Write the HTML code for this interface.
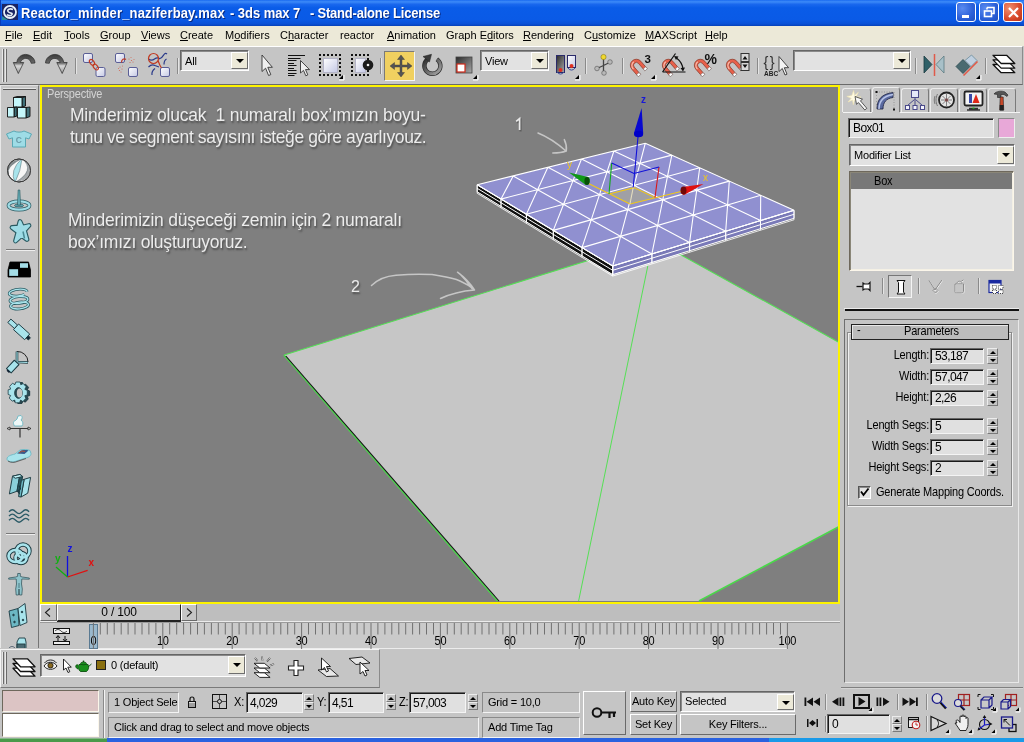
<!DOCTYPE html>
<html><head><meta charset="utf-8">
<style>
*{box-sizing:border-box;margin:0;padding:0}
html,body{width:1024px;height:742px;overflow:hidden;background:#c5c5c5;font-family:"Liberation Sans",sans-serif;font-size:12px;color:#000}
#root{position:absolute;left:0;top:0;width:1024px;height:742px;will-change:transform}
.abs{position:absolute}
svg{position:absolute;overflow:visible}
#title{position:absolute;left:0;top:0;width:1024px;height:26px;background:linear-gradient(#1a6af0 0,#3d8bf8 7%,#1a68ee 16%,#0a5ce8 30%,#0a5ae6 75%,#0a50d6 92%,#0640b8 100%);border-left:1px solid #0a3cb8}
#title .t{position:absolute;left:20px;top:6px;color:#fff;font-weight:bold;font-size:13px;letter-spacing:0.05px;white-space:pre;text-shadow:1px 1px 0 #0a2a80;transform:scaleY(1.1);transform-origin:0 60%}
#menu{position:absolute;left:0;top:26px;width:1024px;height:20px;background:#ece9d8}
#menu span{position:absolute;top:3px;font-size:11px;white-space:pre}
#tb{position:absolute;left:0;top:46px;width:1023px;height:39px;background:#c5c5c5;border-top:1px solid #fff;border-bottom:1px solid #6a6a6a;border-right:1px solid #8c8c8c}
.dd{position:absolute;background:#e2e2e2;border:1px solid;border-color:#666 #fff #fff #666;box-shadow:inset 1px 1px 0 #8a8a8a}
.dd .b{position:absolute;right:0;top:0;bottom:1px;width:17px;background:#ece9d8;border:1px solid;border-color:#fff #6e6e6e #6e6e6e #fff}
.dd .b:after{content:"";position:absolute;left:3.5px;top:6px;border:4px solid transparent;border-top:4px solid #000;border-bottom:0}
.dd .x{position:absolute;left:3px;top:3px;font-size:11px;white-space:pre}
.sep{position:absolute;width:2px;border-left:1px solid #8a8a8a;border-right:1px solid #e4e4e4}
.fly{position:absolute;width:0;height:0;border:2px solid transparent;border-right-color:#000;border-bottom-color:#000}
#vp{position:absolute;left:40px;top:85px;width:800px;height:519px;background:#7f7f7f;border:2px solid #fdf300;overflow:hidden}
.vt{position:absolute;color:#ececec;font-size:17.5px;white-space:pre;text-shadow:1px 2px 2px rgba(40,40,40,.6)}
.fld{position:absolute;background:#e0e0e0;border:1px solid;border-color:#666 #f4f4f4 #f4f4f4 #666;box-shadow:inset 1px 1px 0 #1a1a1a;font-size:11px;white-space:pre;padding:2px 0 0 3px;overflow:hidden}
.r{text-align:right}
.lbl{position:absolute;font-size:11px;white-space:pre;transform:scaleY(1.08);transform-origin:50% 65%}
.spn{position:absolute;width:11px;height:16px}
.spn i{position:absolute;left:0;width:11px;height:8px;border:1px solid;border-color:#ececec #7a7a7a #7a7a7a #ececec}
.spn i:first-child{top:0}.spn i:last-child{top:8px}
.spn i:after{content:"";position:absolute;left:1.5px;top:1.5px;border:3px solid transparent;border-bottom:3px solid #000;border-top:0}
.spn i:last-child:after{border-top:3px solid #000;border-bottom:0;top:2px}
.spn.s{width:10px;height:16px}.spn.s i{width:10px}
.spn.s i:after{left:1px}
.wb{position:absolute;top:2px;width:20px;height:20px;border:1px solid #fff;border-radius:3px;background:radial-gradient(circle at 30% 30%,#5a8bf0,#2a5fd8 60%,#1d4ec0)}
.wc{background:radial-gradient(circle at 30% 30%,#f09070,#d8492a 60%,#b83318)}
.sf{position:absolute;border:1px solid;border-color:#8a8a8a #f4f4f4 #f4f4f4 #8a8a8a;font-size:11px;white-space:pre;padding:3px 0 0 5px;overflow:hidden}
.lbl,.btn,.sf,.dd .x{letter-spacing:-.2px}
.fld{letter-spacing:-.6px}
.btn{position:absolute;background:#c5c5c5;border:1px solid;border-color:#fff #6a6a6a #6a6a6a #fff;font-size:11px;white-space:pre;text-align:center;overflow:hidden}
</style></head><body>
<div id="root"><div id="title"><svg style="left:1px;top:4px" width="16" height="16" viewBox="0 0 16 16"><rect width="16" height="16" fill="#1a2464"/><path d="M0 12v4h6z" fill="#2a8a9a"/><circle cx="8" cy="8" r="6" fill="none" stroke="#e8f0f8" stroke-width="1.8"/><path d="M11 5.5C8 4 5 5.5 6 7.5S11 8.5 10 10.5 6 11.5 5 10.5" fill="none" stroke="#e8f0f8" stroke-width="1.6"/></svg><div class="t" style="letter-spacing:.16px">Reactor_minder_naziferbay.max</div><div class="t" style="left:229px;letter-spacing:-.05px">- 3ds max 7</div><div class="t" style="left:309px;letter-spacing:-.21px">- Stand-alone License</div>
<div class="wb" style="left:955px"><i style="position:absolute;left:5px;top:12px;width:7px;height:3px;background:#fff"></i></div>
<div class="wb" style="left:978px"><svg width="19" height="19" viewBox="0 0 19 19" style="left:0;top:0"><path d="M7 4.5h7v6h-2M7 4.5v2" fill="none" stroke="#fff" stroke-width="1.6"/><rect x="4.5" y="8" width="7" height="5.5" fill="none" stroke="#fff" stroke-width="1.6"/></svg></div>
<div class="wb wc" style="left:1002px"><svg width="19" height="19" viewBox="0 0 19 19" style="left:0;top:0"><path d="M5 5l9 9M14 5l-9 9" stroke="#fff" stroke-width="2.2"/></svg></div>
</div>
<div id="menu"><span style="left:5px"><u>F</u>ile</span><span style="left:33px"><u>E</u>dit</span><span style="left:64px"><u>T</u>ools</span><span style="left:100px"><u>G</u>roup</span><span style="left:141px"><u>V</u>iews</span><span style="left:180px"><u>C</u>reate</span><span style="left:225px">M<u>o</u>difiers</span><span style="left:280px">C<u>h</u>aracter</span><span style="left:340px">reactor</span><span style="left:387px"><u>A</u>nimation</span><span style="left:446px">Graph E<u>d</u>itors</span><span style="left:523px"><u>R</u>endering</span><span style="left:584px">C<u>u</u>stomize</span><span style="left:645px"><u>M</u>AXScript</span><span style="left:705px"><u>H</u>elp</span></div>
<div id="tb"></div>
<div class="abs" style="left:2px;top:49px;width:2px;height:33px;border-left:1px solid #e8e8e8;border-right:1px solid #6a6a6a"></div>
<div class="abs" style="left:5px;top:49px;width:2px;height:33px;border-left:1px solid #e8e8e8;border-right:1px solid #6a6a6a"></div>
<div class="sep" style="left:75px;top:58px;height:16px"></div><div class="sep" style="left:177px;top:58px;height:16px"></div><div class="sep" style="left:380px;top:58px;height:16px"></div><div class="sep" style="left:585px;top:58px;height:16px"></div><div class="sep" style="left:622px;top:58px;height:16px"></div><div class="sep" style="left:757px;top:58px;height:16px"></div><div class="sep" style="left:915px;top:58px;height:16px"></div><div class="sep" style="left:985px;top:58px;height:16px"></div><div class="dd" style="left:180px;top:50px;width:69px;height:21px"><span class="x" style="top:4px;left:4px">All</span><div class="b" style="top:1px;bottom:1px"></div></div>
<div class="dd" style="left:480px;top:50px;width:69px;height:21px"><span class="x" style="top:4px;left:4px">View</span><div class="b" style="top:1px;bottom:1px"></div></div>
<div class="dd" style="left:793px;top:50px;width:118px;height:21px"><div class="b" style="top:1px;bottom:1px"></div></div>
<div class="abs" style="left:384px;top:51px;width:31px;height:30px;background:#f0d060;border:1px solid;border-color:#7a7a7a #f4f4f4 #f4f4f4 #7a7a7a"></div>
<div class="abs" style="left:0px;top:85px;width:39px;height:563px;border-left:1px solid #e8e8e8;border-right:1px solid #757575;border-top:1px solid #e0e0e0"></div>
<div class="abs" style="left:3px;top:88px;width:33px;height:2px;border-top:1px solid #e4e4e4;border-bottom:1px solid #5a5a5a"></div>
<div class="abs" style="left:6px;top:249px;width:29px;height:2px;border-top:1px solid #7a7a7a;border-bottom:1px solid #eee"></div>
<div class="abs" style="left:6px;top:533px;width:29px;height:2px;border-top:1px solid #7a7a7a;border-bottom:1px solid #eee"></div>
<div id="vp"></div>
<div class="lbl" style="left:47px;top:88px;color:#d4d4d4;font-size:11px">Perspective</div>
<div class="vt" id="l1" style="left:70px;top:105px;letter-spacing:-.22px">Minderimiz olucak  1 numaralı box’ımızın boyu-</div>
<div class="vt" id="l2" style="left:70px;top:127px;letter-spacing:-.4px">tunu ve segment sayısını isteğe göre ayarlıyouz.</div>
<div class="vt" id="l3" style="left:68px;top:210px;letter-spacing:-.22px">Minderimizin düşeceği zemin için 2 numaralı</div>
<div class="vt" id="l4" style="left:68px;top:232px;letter-spacing:-.22px">box’ımızı oluşturuyoruz.</div>
<div class="vt" style="left:351px;top:278px;font-size:16px">2</div>
<!-- right command panel -->

<div class="abs" style="left:842px;top:88px;width:29px;height:24px;border:1px solid;border-color:#ececec #7a7a7a transparent #ececec;border-radius:3px 3px 0 0;border-bottom:0"></div><div class="abs" style="left:872px;top:87px;width:28px;height:25px;border:1px solid;border-color:#ececec #7a7a7a transparent #ececec;border-radius:3px 3px 0 0;border-bottom:0"></div><div class="abs" style="left:901px;top:88px;width:28px;height:24px;border:1px solid;border-color:#ececec #7a7a7a transparent #ececec;border-radius:3px 3px 0 0;border-bottom:0"></div><div class="abs" style="left:930px;top:88px;width:28px;height:24px;border:1px solid;border-color:#ececec #7a7a7a transparent #ececec;border-radius:3px 3px 0 0;border-bottom:0"></div><div class="abs" style="left:959px;top:88px;width:28px;height:24px;border:1px solid;border-color:#ececec #7a7a7a transparent #ececec;border-radius:3px 3px 0 0;border-bottom:0"></div><div class="abs" style="left:988px;top:88px;width:28px;height:24px;border:1px solid;border-color:#ececec #7a7a7a transparent #ececec;border-radius:3px 3px 0 0;border-bottom:0"></div><div class="abs" style="left:843px;top:112px;width:29px;height:1px;background:#f4f4f4"></div><div class="abs" style="left:900px;top:112px;width:120px;height:1px;background:#f4f4f4"></div>
<div class="fld" style="left:848px;top:118px;width:146px;height:20px;font-size:12px;padding:2px 0 0 4px">Box01</div>
<div class="abs" style="left:998px;top:118px;width:17px;height:20px;background:#e8a8d8;border:1px solid;border-color:#8a8a8a #eee #eee #8a8a8a"></div>
<div class="dd" style="left:849px;top:144px;width:166px;height:22px"><span class="x" style="top:4px;left:4px;font-size:11px">Modifier List</span><div class="b" style="top:1px;bottom:1px"></div></div>
<div class="abs" style="left:849px;top:171px;width:165px;height:100px;background:#e2e2e2;border:1px solid;border-color:#6e685c #fbf6ea #fbf6ea #6e685c;box-shadow:inset 1px 1px 0 #8a8678,inset -1px -1px 0 #f4f0e4"></div>
<div class="abs" style="left:851px;top:173px;width:161px;height:16px;background:#787878"></div>
<div class="lbl" style="left:874px;top:175px;font-size:11px">Box</div>
<div class="sep" style="left:882px;top:278px;height:16px"></div><div class="sep" style="left:918px;top:278px;height:16px"></div><div class="sep" style="left:978px;top:278px;height:16px"></div>
<div class="abs" style="left:888px;top:275px;width:24px;height:23px;background:#cfcfcf;border:1px solid;border-color:#777 #f4f4f4 #f4f4f4 #777"></div>
<div class="abs" style="left:844px;top:308px;width:175px;height:1px;background:#ececec"></div><div class="abs" style="left:845px;top:309px;width:174px;height:2px;background:#111"></div>
<div class="abs" style="left:844px;top:319px;width:175px;height:364px;border:1px solid;border-color:#6e6e6e #e8e8e8 #e8e8e8 #6e6e6e"></div>
<div class="abs" style="left:847px;top:332px;width:165px;height:174px;border:1px solid #8a8a8a;box-shadow:1px 1px 0 #f0f0f0,inset 1px 1px 0 #f0f0f0"></div>
<div class="abs" style="left:851px;top:324px;width:158px;height:16px;background:#bcbcbc;border:1px solid #222;box-shadow:inset 1px 1px 0 #e8e8e8"></div>
<div class="lbl" style="left:857px;top:324px;font-size:11px">-</div>
<div class="lbl" id="par" style="left:904px;top:325px;font-size:11px">Parameters</div>
<div class="lbl r" style="right:95px;top:349px;font-size:11px">Length:</div><div class="fld" style="left:930px;top:348px;width:54px;height:16px;padding:0 0 0 4px;font-size:12px;line-height:14px">53,187</div><div class="spn" style="left:987px;top:348px"><i></i><i></i></div><div class="lbl r" style="right:95px;top:370px;font-size:11px">Width:</div><div class="fld" style="left:930px;top:369px;width:54px;height:16px;padding:0 0 0 4px;font-size:12px;line-height:14px">57,047</div><div class="spn" style="left:987px;top:369px"><i></i><i></i></div><div class="lbl r" style="right:95px;top:391px;font-size:11px">Height:</div><div class="fld" style="left:930px;top:390px;width:54px;height:16px;padding:0 0 0 4px;font-size:12px;line-height:14px">2,26</div><div class="spn" style="left:987px;top:390px"><i></i><i></i></div><div class="lbl r" style="right:95px;top:419px;font-size:11px">Length Segs:</div><div class="fld" style="left:930px;top:418px;width:54px;height:16px;padding:0 0 0 4px;font-size:12px;line-height:14px">5</div><div class="spn" style="left:987px;top:418px"><i></i><i></i></div><div class="lbl r" style="right:95px;top:440px;font-size:11px">Width Segs:</div><div class="fld" style="left:930px;top:439px;width:54px;height:16px;padding:0 0 0 4px;font-size:12px;line-height:14px">5</div><div class="spn" style="left:987px;top:439px"><i></i><i></i></div><div class="lbl r" style="right:95px;top:461px;font-size:11px">Height Segs:</div><div class="fld" style="left:930px;top:460px;width:54px;height:16px;padding:0 0 0 4px;font-size:12px;line-height:14px">2</div><div class="spn" style="left:987px;top:460px"><i></i><i></i></div><div class="abs" style="left:858px;top:486px;width:13px;height:13px;background:#e2e2e2;border:1px solid;border-color:#555 #fff #fff #555;box-shadow:inset 1px 1px 0 #8a8a8a"></div>
<div class="lbl" id="gmc" style="left:876px;top:486px;font-size:11px">Generate Mapping Coords.</div>
<!-- time slider -->
<div class="abs" style="left:40px;top:604px;width:800px;height:19px;background:#bebebe;border-bottom:1px solid #9a9a9a;box-shadow:inset 0 -1px 0 #ececec"></div>
<div class="btn" style="left:40px;top:604px;width:17px;height:17px"></div>
<div class="btn" style="left:57px;top:604px;width:124px;height:17px;font-size:12px;line-height:15px;border-color:#fff #222 #222 #fff;box-shadow:0 1px 0 #222">0 / 100</div>
<div class="btn" style="left:181px;top:604px;width:16px;height:17px"></div>
<!-- track bar -->
<div class="abs" style="left:89px;top:623px;width:699px;height:26px;background:#cacaca;border-bottom:1px solid #ececec"></div>
<div class="abs" style="left:89px;top:624px;width:9px;height:25px;background:#9ab8cc;border:1px solid #5a7a92"></div>
<div class="lbl" style="left:73.4px;width:40px;text-align:center;top:635px;font-size:11px;color:#000;text-shadow:0 0 1px #cacaca">0</div><div class="lbl" style="left:142.8px;width:40px;text-align:center;top:635px;font-size:11px;color:#000;text-shadow:0 0 1px #cacaca">10</div><div class="lbl" style="left:212.2px;width:40px;text-align:center;top:635px;font-size:11px;color:#000;text-shadow:0 0 1px #cacaca">20</div><div class="lbl" style="left:281.6px;width:40px;text-align:center;top:635px;font-size:11px;color:#000;text-shadow:0 0 1px #cacaca">30</div><div class="lbl" style="left:351.0px;width:40px;text-align:center;top:635px;font-size:11px;color:#000;text-shadow:0 0 1px #cacaca">40</div><div class="lbl" style="left:420.4px;width:40px;text-align:center;top:635px;font-size:11px;color:#000;text-shadow:0 0 1px #cacaca">50</div><div class="lbl" style="left:489.8px;width:40px;text-align:center;top:635px;font-size:11px;color:#000;text-shadow:0 0 1px #cacaca">60</div><div class="lbl" style="left:559.2px;width:40px;text-align:center;top:635px;font-size:11px;color:#000;text-shadow:0 0 1px #cacaca">70</div><div class="lbl" style="left:628.6px;width:40px;text-align:center;top:635px;font-size:11px;color:#000;text-shadow:0 0 1px #cacaca">80</div><div class="lbl" style="left:698.0px;width:40px;text-align:center;top:635px;font-size:11px;color:#000;text-shadow:0 0 1px #cacaca">90</div><div class="lbl" style="left:767.4px;width:40px;text-align:center;top:635px;font-size:11px;color:#000;text-shadow:0 0 1px #cacaca">100</div><!-- layer toolbar -->
<div class="abs" style="left:0;top:649px;width:380px;height:39px;border:1px solid;border-color:#f4f4f4 #8a8a8a #7a7a7a #f4f4f4"></div>
<div class="abs" style="left:2px;top:652px;width:2px;height:32px;border-left:1px solid #e8e8e8;border-right:1px solid #6a6a6a"></div>
<div class="abs" style="left:5px;top:652px;width:2px;height:32px;border-left:1px solid #e8e8e8;border-right:1px solid #6a6a6a"></div>
<div class="dd" style="left:40px;top:654px;width:206px;height:23px"><span class="x" style="left:70px;top:4px;font-size:11px">0 (default)</span><div class="b" style="top:1px;bottom:2px"></div></div>
<div class="abs" style="left:96px;top:660px;width:10px;height:10px;background:#8a7010;border:1px solid #222"></div>
<!-- status bar -->
<div class="abs" style="left:841px;top:687px;width:182px;height:2px;background:#d4d4d4;border-top:1px solid #808080"></div>
<div class="abs" style="left:2px;top:690px;width:97px;height:22px;background:#dcc4c4;border:1px solid;border-color:#6e685c #fbf6ea #fbf6ea #6e685c"></div>
<div class="abs" style="left:2px;top:713px;width:97px;height:24px;background:#fff;border:1px solid;border-color:#6e685c #fbf6ea #fbf6ea #6e685c"></div>
<div class="abs" style="left:103px;top:690px;width:2px;height:48px;border-left:1px solid #8a8a8a;border-right:1px solid #f4f4f4"></div>
<div class="sf" style="left:108px;top:692px;width:71px;height:21px">1 Object Sele</div>
<div class="sf" style="left:108px;top:717px;width:371px;height:21px">Click and drag to select and move objects</div>
<div class="sf" style="left:482px;top:692px;width:98px;height:21px">Grid = 10,0</div>
<div class="sf" style="left:482px;top:717px;width:98px;height:21px">Add Time Tag</div>
<div class="lbl" style="left:234px;top:696px;font-size:11px">X:</div><div class="fld" style="left:246px;top:692px;width:57px;height:21px;padding:3px 0 0 3px;font-size:12px">4,029</div><div class="spn s" style="left:304px;top:694px"><i></i><i></i></div>
<div class="lbl" style="left:317px;top:696px;font-size:11px">Y:</div><div class="fld" style="left:328px;top:692px;width:56px;height:21px;padding:3px 0 0 3px;font-size:12px">4,51</div><div class="spn s" style="left:386px;top:694px"><i></i><i></i></div>
<div class="lbl" style="left:399px;top:696px;font-size:11px">Z:</div><div class="fld" style="left:409px;top:692px;width:57px;height:21px;padding:3px 0 0 3px;font-size:12px">57,003</div><div class="spn s" style="left:468px;top:694px"><i></i><i></i></div>
<div class="btn" style="left:583px;top:691px;width:43px;height:44px"></div>
<div class="btn" style="left:630px;top:691px;width:47px;height:21px;font-size:11px;line-height:19px">Auto Key</div>
<div class="btn" style="left:630px;top:714px;width:47px;height:21px;font-size:11px;line-height:19px">Set Key</div>
<div class="dd" style="left:680px;top:691px;width:115px;height:21px"><span class="x" style="left:4px;top:3px;font-size:11px">Selected</span><div class="b" style="top:2px;bottom:1px"></div></div>
<div class="btn" style="left:680px;top:714px;width:116px;height:21px;font-size:11px;line-height:19px">Key Filters...</div>
<div class="sep" style="left:825px;top:694px;height:16px"></div><div class="sep" style="left:897px;top:694px;height:16px"></div><div class="sep" style="left:926px;top:694px;height:16px"></div>
<div class="sep" style="left:825px;top:716px;height:16px"></div><div class="sep" style="left:926px;top:716px;height:16px"></div>
<div class="fld" style="left:827px;top:714px;width:63px;height:20px;padding:2px 0 0 4px;font-size:12px">0</div><div class="spn s" style="left:892px;top:716px"><i></i><i></i></div>
<div class="abs" style="left:853px;top:694px;width:17px;height:15px;border:2px solid #111"></div>
<!-- taskbar strip -->
<div class="abs" style="left:0;top:738px;width:1024px;height:4px;background:#2a62e0"></div>
<div class="abs" style="left:0;top:738px;width:107px;height:4px;border-top:1px solid #8ab88a;background:#4a9a4a"></div>
<div class="abs" style="left:769px;top:738px;width:255px;height:4px;background:#1a9ae8"></div>
<svg style="left:0;top:0" width="1024" height="742" viewBox="0 0 1024 742">
<defs>
<linearGradient id="gd" x1="0" y1="0" x2="1" y2="1"><stop offset="0" stop-color="#2a2a2a"/><stop offset="1" stop-color="#a8a8a8"/></linearGradient>
<linearGradient id="gd2" x1="0" y1="0" x2="0" y2="1"><stop offset="0" stop-color="#3a3a3a"/><stop offset=".45" stop-color="#6a6a6a"/><stop offset=".6" stop-color="#d8d8d8"/><stop offset="1" stop-color="#9a9a9a"/></linearGradient>
<linearGradient id="sq" x1="0" y1="0" x2="1" y2="1"><stop offset="0" stop-color="#fff"/><stop offset="1" stop-color="#c4c8e4"/></linearGradient>
</defs>
<!-- undo / redo -->
<path id="undo" d="M18.3 73.5L13.3 62.5h3.5C17.5 56 24 52.5 30 55.5c3.2 1.8 5 4.3 5 7.5l-3.8 .3c-.6-3.5-3.6-5.5-6.8-4.7-2.2 .7-3.6 2.2-4 3.9h3.3z" fill="url(#gd2)" stroke="#2a2a2a" stroke-width=".7"/>
<use href="#undo" transform="translate(80.5,0) scale(-1,1)"/>
<!-- link -->
<g stroke="#5a5e96" stroke-width="1" fill="url(#sq)"><rect x="83.5" y="53.5" width="9" height="9" rx="1.5"/><rect x="96" y="67.5" width="9" height="9" rx="1.5"/>
<rect x="115.5" y="53.5" width="9" height="9" rx="1.5"/><rect x="128.5" y="67.5" width="9" height="9" rx="1.5"/><rect x="160.5" y="67.5" width="9" height="9" rx="1.5"/></g>
<g fill="none" stroke="#c03a22" stroke-width="1.2"><ellipse cx="92" cy="62.3" rx="2" ry="3.3" transform="rotate(-38 92 62.3)"/><ellipse cx="95.7" cy="67" rx="2" ry="3.3" transform="rotate(-38 95.7 67)"/></g>
<g fill="none" stroke="#c03a22" stroke-width="1.2"><path d="M121.5 62.5c0-3 2.5-4.5 4.5-3"/></g>
<g fill="#d06a58"><circle cx="129" cy="59" r=".6"/><circle cx="131.5" cy="60.5" r=".6"/><circle cx="130" cy="62.5" r=".6"/><circle cx="133" cy="62" r=".6"/><circle cx="134" cy="59.5" r=".5"/><circle cx="131" cy="57.5" r=".5"/><circle cx="120" cy="67" r=".6"/><circle cx="122" cy="69" r=".6"/><circle cx="119.5" cy="70.5" r=".6"/><circle cx="122.5" cy="66" r=".5"/><circle cx="121" cy="72" r=".5"/><circle cx="118.5" cy="68.5" r=".5"/></g>
<g fill="none" stroke-width="1.2"><path d="M148.5 59c2 1.5 4 1.5 6 0s4-1.5 5.5 0" stroke="#2a3a8a"/><path d="M148.5 67c2-2 4.5-2.5 6.5-1.5l4 1.5" stroke="#2a3a8a"/><path d="M160 58.5c2-.5 3-2.5 4-4s2-1.5 3-.500" stroke="#2a3a8a"/><path d="M166.5 59c-2 1-2.5 3-2.5 5.5" stroke="#2a3a8a"/><path d="M152 75c-.5-3 1-5 3-6.5" stroke="#2a3a8a"/>
<circle cx="153.5" cy="58.5" r="5" stroke="#c03a22"/><path d="M158 60.5c1 3 2 5.5 3.5 7.5" stroke="#c03a22"/></g>
<!-- select arrow -->
<path d="M262 55v16.5l3.6-3.3 3 7.3 2.2-.9-3-7.3h4.6z" fill="#f0f0f0" stroke="#333" stroke-width=".9"/>
<!-- select by name -->
<path d="M288 55.5h17M288 58.5h12.5M288 60.5h8.5M288 63.5h6M288 65.5h8.5M288 68.5h6M288 70.5h8.5M288 73.5h8.5M288 75.5h6.5" stroke="#111" stroke-width="1"/>
<path d="M300.5 60.5v12.5l3-2.6 2.3 5.4 2-.9-2.3-5.3h4z" fill="#f0f0f0" stroke="#333" stroke-width=".9"/>
<!-- rect region -->
<rect x="320" y="55" width="20" height="20" fill="none" stroke="#111" stroke-width="2" stroke-dasharray="2 2" stroke-dashoffset="1"/><rect x="323.5" y="58.5" width="14" height="14" fill="url(#sq)" stroke="#b4b4c8" stroke-width="1"/>
<path d="M343 79v-4l-4 4z" fill="#000"/><path d="M344 75v5h-5" fill="none" stroke="#fff" stroke-width="1"/>
<!-- window crossing -->
<rect x="352" y="55" width="16" height="20" fill="none" stroke="#111" stroke-width="2" stroke-dasharray="2 2" stroke-dashoffset="1"/><rect x="355.5" y="58.5" width="10" height="14" fill="url(#sq)" stroke="#b4b4c8" stroke-width="1"/>
<circle cx="368" cy="65" r="5.3" fill="#1a1a1a"/><circle cx="368" cy="65" r="1.3" fill="#eee"/>
<!-- move -->
<g fill="#555" stroke="#333" stroke-width=".4"><path d="M401 55l3.5 4.5h-2.5v5.5h5.5v-2.5l4.5 3.5-4.5 3.5v-2.5h-5.5v5.5h2.5l-3.5 4.5-3.5-4.5h2.5v-5.5h-5.5v2.5l-4.5-3.5 4.5-3.5v2.5h5.5v-5.5h-2.5z"/></g>
<!-- rotate -->
<path d="M428.3 58.9A8 8 0 1 0 436.9 59.2" fill="none" stroke="#2a2a2a" stroke-width="4.4"/><path d="M428.3 58.9A8 8 0 1 0 436.9 59.2" fill="none" stroke="url(#gd)" stroke-width="3"/><path d="M431.5 54.3L423 56.5L429.5 62z" fill="#3a3a3a" stroke="#222" stroke-width=".5"/>
<!-- scale -->
<rect x="456" y="57" width="16" height="16" fill="url(#gd)" stroke="#444" stroke-width=".8"/><rect x="457" y="64" width="8" height="8" fill="#fff" stroke="#d02a1a" stroke-width="1.2"/>
<path d="M477 79v-4l-4 4z" fill="#000"/><path d="M478 75v5h-5" fill="none" stroke="#fff" stroke-width="1"/>
<!-- pivot -->
<rect x="556.5" y="55.5" width="8" height="17" fill="url(#gd)" stroke="#2a2a6a" stroke-width="1"/><rect x="567.5" y="55.5" width="8" height="12" fill="url(#sq)" stroke="#2a2a6a" stroke-width="1"/>
<circle cx="560.5" cy="70" r="2" fill="#e03020"/><circle cx="571.5" cy="66" r="2" fill="#e03020"/><path d="M557 72a4 4 0 0 0 7 0M568 68a4 4 0 0 0 7 0" fill="none" stroke="#3a4a9a" stroke-width="1"/>
<path d="M579 79v-4l-4 4z" fill="#000"/><path d="M580 75v5h-5" fill="none" stroke="#fff" stroke-width="1"/>
<!-- manipulate -->
<path d="M603.5 57v15M597 68.5l6.5-3 6-3" stroke="#444" stroke-width="1.3" fill="none"/><circle cx="603.5" cy="57" r="2.6" fill="#f0d830" stroke="#8a7a10" stroke-width=".6"/><circle cx="597" cy="68.5" r="2.3" fill="#b8b8b8" stroke="#555" stroke-width=".6"/><circle cx="610" cy="62" r="2.3" fill="#b8b8b8" stroke="#555" stroke-width=".6"/><circle cx="604" cy="73" r="2.3" fill="#b8b8b8" stroke="#555" stroke-width=".6"/>
<!-- snaps -->
<g transform="translate(630,58) rotate(-41 7 8)"><path d="M1 16.5V7a6 6 0 0 1 12 0V16.5h-3.2V7a2.8 2.8 0 0 0-5.6 0V16.5z" fill="#e8604a" stroke="#8a3a2a" stroke-width=".7"/><path d="M2.3 8a4.7 4.7 0 0 1 5-5.3" fill="none" stroke="#f8c0b0" stroke-width="1.1"/><rect x="1" y="14.3" width="3.2" height="2.6" fill="#fff" stroke="#666" stroke-width=".5"/><rect x="9.8" y="14.3" width="3.2" height="2.6" fill="#fff" stroke="#666" stroke-width=".5"/></g><g transform="translate(662,58) rotate(-41 7 8)"><path d="M1 16.5V7a6 6 0 0 1 12 0V16.5h-3.2V7a2.8 2.8 0 0 0-5.6 0V16.5z" fill="#e8604a" stroke="#8a3a2a" stroke-width=".7"/><path d="M2.3 8a4.7 4.7 0 0 1 5-5.3" fill="none" stroke="#f8c0b0" stroke-width="1.1"/><rect x="1" y="14.3" width="3.2" height="2.6" fill="#fff" stroke="#666" stroke-width=".5"/><rect x="9.8" y="14.3" width="3.2" height="2.6" fill="#fff" stroke="#666" stroke-width=".5"/></g><g transform="translate(694,58) rotate(-41 7 8)"><path d="M1 16.5V7a6 6 0 0 1 12 0V16.5h-3.2V7a2.8 2.8 0 0 0-5.6 0V16.5z" fill="#e8604a" stroke="#8a3a2a" stroke-width=".7"/><path d="M2.3 8a4.7 4.7 0 0 1 5-5.3" fill="none" stroke="#f8c0b0" stroke-width="1.1"/><rect x="1" y="14.3" width="3.2" height="2.6" fill="#fff" stroke="#666" stroke-width=".5"/><rect x="9.8" y="14.3" width="3.2" height="2.6" fill="#fff" stroke="#666" stroke-width=".5"/></g><g transform="translate(726,58) rotate(-41 7 8)"><path d="M1 16.5V7a6 6 0 0 1 12 0V16.5h-3.2V7a2.8 2.8 0 0 0-5.6 0V16.5z" fill="#e8604a" stroke="#8a3a2a" stroke-width=".7"/><path d="M2.3 8a4.7 4.7 0 0 1 5-5.3" fill="none" stroke="#f8c0b0" stroke-width="1.1"/><rect x="1" y="14.3" width="3.2" height="2.6" fill="#fff" stroke="#666" stroke-width=".5"/><rect x="9.8" y="14.3" width="3.2" height="2.6" fill="#fff" stroke="#666" stroke-width=".5"/></g><path d="M655 79v-4l-4 4z" fill="#000"/><path d="M656 75v5h-5" fill="none" stroke="#fff" stroke-width="1"/>
<text x="644.5" y="63" font-family="Liberation Sans" font-weight="bold" font-size="11.5" fill="#111">3</text>
<path d="M662.5 72h23M662.5 72l13-18.5" stroke="#111" stroke-width="1.2" fill="none"/><path d="M676.5 58c4 3 6 7 6.5 11" stroke="#111" stroke-width="1.2" fill="none"/><path d="M674 56l4.5 .5-2.5 3.5zM683 71.5l-2.5-3.5 4.5-.5z" fill="#111"/>
<text x="704.5" y="64" font-family="Liberation Sans" font-weight="bold" font-size="14" fill="#111">%</text>
<rect x="741" y="53.5" width="8" height="8" fill="#d8d8d8" stroke="#333" stroke-width="1"/><rect x="741" y="62.5" width="8" height="8" fill="#d8d8d8" stroke="#333" stroke-width="1"/><path d="M742.5 59.5l2.5-3.5 2.5 3.5zM742.5 64.5l2.5 3.5 2.5-3.5z" fill="#111"/>
<!-- named sel -->
<text x="763.5" y="66.5" font-family="Liberation Sans" font-size="14.5" fill="#333" letter-spacing="1.5">{}</text><text x="764" y="76.3" font-family="Liberation Sans" font-weight="bold" font-size="6.5" fill="#222">ABC</text>
<path d="M779 56.5v15l3.3-3 2.7 6.5 2-.8-2.7-6.5h4.3z" fill="#f4f4f4" stroke="#333" stroke-width=".9"/>
<!-- mirror -->
<path d="M924 56l8 8.5-8 8.5z" fill="#2e6068" stroke="#1a3a40" stroke-width=".8"/><path d="M944 56l-8 8.5 8 8.5z" fill="#a8c0c8" stroke="#5a7a80" stroke-width=".8"/><path d="M934.5 54v22" stroke="#e05a4a" stroke-width="1.5"/>
<!-- align -->
<path d="M956 66.5l7-7 7 7-7 7z" fill="#4a6a70" stroke="#2a4a50" stroke-width=".8"/><path d="M965 60.5l6.5-5.5 5.5 5.5-6 6z" fill="#c0d0e0" stroke="#6a8a9a" stroke-width=".8"/><path d="M963.5 75.5l14-14" stroke="#e05a4a" stroke-width="1.6"/>
<path d="M980 79v-4l-4 4z" fill="#000"/><path d="M981 75v5h-5" fill="none" stroke="#fff" stroke-width="1"/>
<!-- layers -->
<g fill="#fff" stroke="#111" stroke-width="1.3" stroke-linejoin="round"><path d="M993.0 64.5h13.6l8.2 8.2h-13.6z"/><path d="M993.0 59.9h13.6l8.2 8.2h-13.6z"/><path d="M993.0 55.3h13.6l8.2 8.2h-13.6z"/></g>
<!-- reactor icons -->
<clipPath id="lc"><rect x="0" y="86" width="39" height="562"/></clipPath><g clip-path="url(#lc)">
<g transform="translate(19,108)" stroke="#1c3a42" stroke-width=".9" fill="#a8e4ec" stroke-linejoin="round"><g stroke="#111" stroke-width=".9"><path d="M3-10.5l3.5-1v9.5l-3.5 1z" fill="#3f6f78"/><path d="M-5.5-10.5h8.5v9.5h-8.5z" fill="#c4f6fa"/><path d="M-5.5-10.5l3.5-1h8.5l-3.5 1z" fill="#c4f6fa"/>
<path d="M-5-0.5l3-.5v9l-3 1z" fill="#3f6f78"/><path d="M-11.5-0.5h6.5v9.5h-6.5z" fill="#c4f6fa"/>
<path d="M7-0.5l4-.5v9.5l-4 1.5z" fill="#3f6f78"/><path d="M-1.5-0.5h8.5v10.5h-8.5z" fill="#c4f6fa"/></g></g>
<g transform="translate(19,139.5)" stroke="#1c3a42" stroke-width=".9" fill="#a8e4ec" stroke-linejoin="round"><path d="M-5-8.5c2 1.5 8 1.5 10 0l7.5 3-2.5 5-3.5-1.2v9.2h-13v-9.2l-3.5 1.2-2.5-5z" fill="#9edce6" stroke="#5aa8b4" stroke-width="1"/><text x="-3.3" y="3.5" font-family="Liberation Sans" font-size="8.5" font-weight="bold" fill="#6a9aa8" stroke="none">C</text></g>
<g transform="translate(19,170.5)" stroke="#1c3a42" stroke-width=".9" fill="#a8e4ec" stroke-linejoin="round"><clipPath id="bc"><circle r="11.5"/></clipPath><circle r="11.5" fill="#f6f6f6" stroke="#3a3a3a" stroke-width="1"/><g clip-path="url(#bc)"><path d="M3-12Q-40 0 -4 12Q-21 0 3-12z" fill="#868c8e" stroke="none"/><path d="M3-12Q-10 0 -4 12Q2 0 3-12z" fill="#a8e4ec" stroke="none"/><path d="M3-12Q17 0 -4 12Q40 0 3-12z" fill="#a4a8ab" stroke="none"/><path d="M3-12Q-21 0 -4 12M3-12Q-10 0 -4 12M3-12Q2 0 -4 12M3-12Q17 0 -4 12" fill="none" stroke="#5a6a70" stroke-width=".5"/></g><circle r="11.5" fill="none" stroke="#3a3a3a" stroke-width="1"/></g>
<g transform="translate(19,201)" stroke="#1c3a42" stroke-width=".9" fill="#a8e4ec" stroke-linejoin="round"><ellipse cx="0" cy="4.5" rx="10.5" ry="4.2" fill="none" stroke="#2a5a62" stroke-width="3.6"/><ellipse cx="0" cy="4.5" rx="10.5" ry="4.2" fill="none" stroke="#9edce6" stroke-width="2.2"/><ellipse cx="0" cy="4.5" rx="4.5" ry="1.6" fill="#5aa0aa" stroke="#2a5a62" stroke-width=".8"/><path d="M-.8-11h1.6l.7 15h-3z" fill="#6ab4be" stroke="#2a5a62" stroke-width=".7"/></g>
<g transform="translate(19,231.5)" stroke="#1c3a42" stroke-width=".9" fill="#a8e4ec" stroke-linejoin="round"><path d="M1-10l2.5 5.5 6.5-1.5-4.5 5 2.5 9-5.5-4-6 5.5 2.5-9-6-4.5 6.5-.500z" fill="#2a5a62" stroke="#2a5a62" stroke-width="4.8" stroke-linejoin="round"/><path d="M1-10l2.5 5.5 6.5-1.5-4.5 5 2.5 9-5.5-4-6 5.5 2.5-9-6-4.5 6.5-.500z" fill="#9edce6" stroke="#9edce6" stroke-width="2.6" stroke-linejoin="round"/><path d="M4 0l1.5 7" stroke="#4a8a94" stroke-width="1.5" fill="none"/></g>
<g transform="translate(19,269)" stroke="#1c3a42" stroke-width=".9" fill="#a8e4ec" stroke-linejoin="round"><path d="M-9-7h18.5l2 8v7h-22.5v-7z" fill="#000" stroke="#000" stroke-width=".8"/><rect x="1" y="-5.8" width="8" height="4.6" fill="#a4dce6" stroke="none"/><rect x="-9.8" y=".2" width="8.9" height="6.7" fill="#a4dce6" stroke="none"/></g>
<g transform="translate(19,300.5)" stroke="#1c3a42" stroke-width=".9" fill="#a8e4ec" stroke-linejoin="round"><g transform="rotate(-6)" fill="none"><g stroke="#2a5a62" stroke-width="2.8"><path d="M9-8a9 3.4 0 1 0 -3 2.6"/><ellipse cx="0" cy="-.5" rx="9" ry="3.4"/><ellipse cx="0" cy="5" rx="9" ry="3.4"/></g><g stroke="#a8e4ec" stroke-width="1.4"><path d="M9-8a9 3.4 0 1 0 -3 2.6"/><ellipse cx="0" cy="-.5" rx="9" ry="3.4"/><ellipse cx="0" cy="5" rx="9" ry="3.4"/></g></g></g>
<g transform="translate(19,329.5)" stroke="#1c3a42" stroke-width=".9" fill="#a8e4ec" stroke-linejoin="round"><g transform="rotate(42)"><rect x="-13" y="-2.3" width="9" height="4.6"/><rect x="-4" y="-3.8" width="15" height="7.6"/><rect x="11" y="-1.5" width="3" height="3" fill="#123"/></g></g>
<g transform="translate(19,361)" stroke="#1c3a42" stroke-width=".9" fill="#a8e4ec" stroke-linejoin="round"><path d="M-2-9.5a10.5 10.5 0 0 1 11 10.5" fill="none" stroke="#222" stroke-width="1"/><path d="M-2 1v-10.5M-2 1l11 .5" fill="none" stroke="#1c3a42" stroke-width="2.6"/><path d="M-2 1v-10M-2 1l10.5 .5" fill="none" stroke="#a8e4ec" stroke-width="1.1"/><g transform="rotate(-47 -2 1)"><rect x="-14" y="-2.2" width="11.5" height="6.4" fill="#a8e4ec" stroke="#1c3a42" stroke-width="1"/><rect x="-15.5" y="-.7" width="1.8" height="3.4" fill="#123" stroke="none"/></g></g>
<g transform="translate(19,393)" stroke="#1c3a42" stroke-width=".9" fill="#a8e4ec" stroke-linejoin="round"><g transform="translate(-1,0) scale(.92 1)"><path d="M-2.3-11h4.6l.7 2.7 2.7-1.1 3.2 3.2-1.5 2.5 2.7 1.1v4.6l-2.7 .700 1.1 2.7-3.2 3.2-2.5-1.5-1.1 2.7h-4.6l-.700-2.7-2.7 1.1-3.2-3.2 1.5-2.5-2.7-1.1v-4.6l2.7-.7-1.1-2.7 3.2-3.2 2.5 1.5z" transform="translate(2.6,.6)" fill="#2a4a52" stroke="#1c3a42" stroke-width="1"/><path d="M-2.3-11h4.6l.7 2.7 2.7-1.1 3.2 3.2-1.5 2.5 2.7 1.1v4.6l-2.7 .700 1.1 2.7-3.2 3.2-2.5-1.5-1.1 2.7h-4.6l-.700-2.7-2.7 1.1-3.2-3.2 1.5-2.5-2.7-1.1v-4.6l2.7-.7-1.1-2.7 3.2-3.2 2.5 1.5z" fill="#a8e4ec" stroke="#1c3a42" stroke-width=".8"/><ellipse cx=".5" cy="0" rx="4.2" ry="5.4" fill="#2a4a52" stroke="#1c3a42" stroke-width=".8"/><ellipse cx="1.7" cy="0" rx="3" ry="4.6" fill="#c5c5c5" stroke="none"/></g></g>
<g transform="translate(19,427)" stroke="#1c3a42" stroke-width=".9" fill="#a8e4ec" stroke-linejoin="round"><path d="M-12 1.5h24M1 1.5v9" fill="none" stroke="#333" stroke-width="1.2"/><path d="M-12 1.5l3-1.5v3zM12 1.5l-3-1.5v3z" fill="#eee" stroke="#333"/><path d="M-4.5-1c-1.5-2.5-1.5-5 1-5.5l1.5-1.5 1-3 3-.5c1.5 1 1.5 3 0 4.5 2 1.5 2.5 4 1 6z" fill="#eef8f8" stroke="#6cb8c4"/></g>
<g transform="translate(19,457)" stroke="#1c3a42" stroke-width=".9" fill="#a8e4ec" stroke-linejoin="round"><path d="M-12 2c0-3 4-4 8-5l5-4c4-1 8-.5 10 .5l1 3c0 3-3 4-7 5l-9 3c-4 1-8 0-8-2.5z" stroke="#6cb8c4"/><path d="M-2-3.5l4-3c3-.7 6-.5 7.5 0l-4 3.5z" fill="#3a5a8a" stroke="none"/><path d="M0-4l3-2 3 .5" stroke="#c05030" fill="none"/><path d="M-11 4c3 2 7 1.5 9 .5l9-3" stroke="#555" fill="none"/></g>
<g transform="translate(19,485.5)" stroke="#1c3a42" stroke-width=".9" fill="#a8e4ec" stroke-linejoin="round"><g transform="rotate(10)"><path d="M-8-8l7-3v17l-7 4z" fill="#8ad0da"/><path d="M-1-11l3 1.5v17l-3-1.5z" fill="#2a5a62"/><path d="M-8-8l7-3 3 1.5-7 3z" fill="#c4f6fa"/><path d="M4-7l6-3v16l-6 5z" fill="#a8e4ec"/><path d="M1.5-5.5l2.5-1.5v18l-2.5 0z" fill="#6cb8c4"/><path d="M0 0l2 3-2 2.5 2 3" fill="none" stroke="#1c3a42" stroke-width="1.3"/></g></g>
<g transform="translate(19,516)" stroke="#1c3a42" stroke-width=".9" fill="#a8e4ec" stroke-linejoin="round"><g fill="none" stroke="#2a5a66" stroke-width="1.3"><path d="M-10-4.3c2.5-2.6 4.2-2.6 6.7 0s4.2 2.6 6.7 0 4.2-2.6 6.7 0"/><path d="M-10 0c2.5-2.6 4.2-2.6 6.7 0s4.2 2.6 6.7 0 4.2-2.6 6.7 0"/><path d="M-10 4.3c2.5-2.6 4.2-2.6 6.7 0s4.2 2.6 6.7 0 4.2-2.6 6.7 0"/></g></g>
<g transform="translate(19,554)" stroke="#1c3a42" stroke-width=".9" fill="#a8e4ec" stroke-linejoin="round"><g fill="none" stroke="#1c3a42" stroke-width="4.4"><ellipse cx="-3.5" cy="2" rx="7" ry="6"/><ellipse cx="4" cy="-3" rx="6.5" ry="6.5"/><ellipse cx="2" cy="4" rx="5.5" ry="5"/></g><g fill="none" stroke="#a8e4ec" stroke-width="2.6"><ellipse cx="-3.5" cy="2" rx="7" ry="6"/><ellipse cx="4" cy="-3" rx="6.5" ry="6.5"/><ellipse cx="2" cy="4" rx="5.5" ry="5"/></g></g>
<g transform="translate(19,585)" stroke="#1c3a42" stroke-width=".9" fill="#a8e4ec" stroke-linejoin="round"><path d="M-1.3-11.5h2.6v2.8l2 .7 7 1v1.2l-7.5-.2-.3 5 .8 5 -.5 6h-2.3l-.5-6-.5 6h-2.3l-.5-6 .8-5-.3-5-7.5 .2v-1.2l7-1 2-.7z" fill="#8fc4cc" stroke="#2a4a52" stroke-width=".7"/><path d="M0-2v5" stroke="#3a6a72" stroke-width=".8"/></g>
<g transform="translate(19,617)" stroke="#1c3a42" stroke-width=".9" fill="#a8e4ec" stroke-linejoin="round"><path d="M-10-6l9-2.5 1 17-7.5 2z" fill="#6cb8c4"/><path d="M-1-8.5l7-5 2 19-7 3z"/><circle cx="-5.5" cy="-2" r=".8" fill="#1c3a42"/><circle cx="-4.5" cy="5" r=".8" fill="#1c3a42"/><circle cx="3" cy="-5" r=".8" fill="#1c3a42"/><circle cx="4" cy="3" r=".8" fill="#1c3a42"/></g>
<g transform="translate(19,648)" stroke="#1c3a42" stroke-width=".9" fill="#a8e4ec" stroke-linejoin="round"><path d="M0-10h6l1 4v8h-9v-8z"/><path d="M-10 0c2-2 4-2 6 0" fill="none" stroke="#456"/><rect x="-2" y="-4" width="8" height="6" fill="#4a6a72"/></g>
</g>

<clipPath id="vpc"><rect x="42" y="87" width="796" height="515"/></clipPath>
<g clip-path="url(#vpc)">
<!-- ground plane -->
<path d="M284.3 355L654 240L838 342V527.5L699 601h-201z" fill="#c6c6c6"/>
<path d="M284.3 355L654 240L842 344" fill="none" stroke="#55e055" stroke-width="1.1"/>
<path d="M699 601L842 525" fill="none" stroke="#4ad84a" stroke-width="1.6"/>
<path d="M647.9 265.5L578.6 601" fill="none" stroke="#55e055" stroke-width="1"/>
<path d="M283.8 355L497.5 601" fill="none" stroke="#4ad84a" stroke-width="1.5"/>
<path d="M285.8 356L499 601" fill="none" stroke="#111" stroke-width="1.1"/>
<!-- box -->
<path d="M477.2 184.8L612.7 266.0L612.7 274.6L477.2 191.8z" fill="#101010"/>
<path d="M612.7 266.0L794.0 210.3L794.0 218.3L612.7 274.6z" fill="#7a7ab8"/>
<path d="M477.2 184.8L645.3 143.2L794.0 210.3L612.7 266.0z" fill="#9090d0"/>
<path d="M477.2 184.8L612.7 266.0M477.2 188.3L612.7 270.3M477.2 191.8L612.7 274.6M477.2 184.8v7.0M501.0 199.1v7.3M526.4 214.3v7.6M553.3 230.4v8.0M582.0 247.6v8.3M612.7 266.0v8.6M612.7 266.0L794.0 210.3M612.7 270.3L794.0 214.3M612.7 274.6L794.0 218.3M612.7 266.0v8.6M651.9 253.9v8.5M689.6 242.4v8.4M725.7 231.3v8.2M760.5 220.6v8.1M794.0 210.3v8.0" fill="none" stroke="#fff" stroke-width="1"/>
<path d="M477.2 184.8L612.7 266.0M477.2 193.3L612.7 276.1M477.2 184.8v8.5M501.0 199.1v8.8M526.4 214.3v9.1M553.3 230.4v9.5M582.0 247.6v9.8M612.7 266.0v10.1M612.7 266.0L794.0 210.3M612.7 276.1L794.0 219.8M612.7 266.0v10.1M651.9 253.9v10.0M689.6 242.4v9.9M725.7 231.3v9.7M760.5 220.6v9.6M794.0 210.3v9.5" fill="none" stroke="#fff" stroke-width=".8"/>
<path d="M477.2 184.8L612.7 266.0M477.2 184.8L645.3 143.2M513.2 175.9L651.9 253.9M501.0 199.1L671.8 155.1M547.9 167.3L689.6 242.4M526.4 214.3L699.7 167.8M581.5 159.0L725.7 231.3M553.3 230.4L729.3 181.1M613.9 151.0L760.5 220.6M582.0 247.6L760.7 195.3M645.3 143.2L794.0 210.3M612.7 266.0L794.0 210.3M513.2 175.9L501.0 199.1M537.6 189.7L526.4 214.3M563.6 204.3L553.3 230.4M591.2 219.8L582.0 247.6M620.6 236.3L612.7 266.0M547.9 167.3L537.6 189.7M573.0 180.6L563.6 204.3M599.5 194.6L591.2 219.8M627.7 209.6L620.6 236.3M657.6 225.5L651.9 253.9M581.5 159.0L573.0 180.6M607.0 171.8L599.5 194.6M634.1 185.4L627.7 209.6M662.8 199.7L657.6 225.5M693.3 215.0L689.6 242.4M613.9 151.0L607.0 171.8M640.0 163.3L634.1 185.4M667.5 176.4L662.8 199.7M696.7 190.3L693.3 215.0M727.6 205.0L725.7 231.3M645.3 143.2L640.0 163.3M671.8 155.1L667.5 176.4M699.7 167.8L696.7 190.3M729.3 181.1L727.6 205.0M760.7 195.3L760.5 220.6" fill="none" stroke="#fff" stroke-width="1.1"/>
<!-- gizmo -->
<path d="M630 204L609 194L634 187.6L655 197.5z" fill="#a2a2a0" fill-opacity=".9"/>
<path d="M630 204L683 191M630 204L585.5 182M609 194L634 187.6L655 197.5" fill="none" stroke="#f0c818" stroke-width="1.1"/>
<path d="M609 194L611.7 163" stroke="#10a818" stroke-width="1.1" fill="none"/>
<path d="M655 197.5L659 167" stroke="#d81818" stroke-width="1.1" fill="none"/>
<path d="M611.7 163L634 173.5L659 167M633.2 187.5L638 137" stroke="#1010d8" stroke-width="1.1" fill="none"/>
<path d="M630 204L633.2 187.5" stroke="#e8e0c0" stroke-width="1" fill="none"/>
<path d="M641.6 108L643.2 133a4.6 3 0 0 1 -9.2 0z" fill="#0808d0"/><ellipse cx="638.6" cy="134" rx="4.6" ry="3.3" fill="#0000c8"/>
<path d="M703.5 184L685 194.5a2.8 4 0 0 1 -2 -7.5z" fill="#e01010"/><ellipse cx="683.5" cy="190.5" rx="3" ry="4" fill="#700808"/>
<path d="M569 172.5L588 177a3 4 0 0 1 -3 7.5z" fill="#109818"/><ellipse cx="587" cy="181" rx="2.6" ry="4" fill="#085008"/>
<text x="641" y="103" font-family="Liberation Sans" font-size="10" fill="#1818d8" font-weight="bold">z</text>
<text x="703" y="181" font-family="Liberation Sans" font-size="10" fill="#f0c818">x</text>
<text x="567" y="167.5" font-family="Liberation Sans" font-size="10" fill="#f0c818">y</text>
<!-- annotations -->
<path d="M516.2 121.3L519.6 118.6V130" fill="none" stroke="#3a3a3a" stroke-opacity=".45" stroke-width="2" transform="translate(1,1.5)"/><path d="M516.2 121.3L519.6 118.6V130" fill="none" stroke="#e8e8e8" stroke-width="1.7"/>
<g fill="none" stroke="#c6c6c6" stroke-width="1.3" stroke-linecap="round"><path d="M538 133c10 4 20 11 28 18M564.3 139.6c2 4 2.5 8 2 11.4c-4 1.5-9 2-13.5 2" stroke-width="1.5"/>
<path d="M371.5 285.5C378 279 386 276 396 275.2C410 274 424 274 432 274.6C442 276.5 452 277.5 460 281C466 283.5 471 287 474.5 290M457.5 272.2C464 277 470 283 474.5 290M459.5 273.5C465 279 469 284 472 288.5M474.5 290C462 291 450 294 440.5 298.5" stroke-width="1.5"/></g>
<!-- axis tripod -->
<path d="M67.5 577V556" stroke="#1010e0" stroke-width="1.3"/><path d="M67.5 577L87.6 570.4" stroke="#e01010" stroke-width="1.3"/><path d="M67.5 577L56 567" stroke="#10b010" stroke-width="1.3"/>
<text x="67.5" y="552" font-family="Liberation Sans" font-size="10" font-weight="bold" fill="#1010e0">z</text><text x="88.5" y="565.8" font-family="Liberation Sans" font-size="10" font-weight="bold" fill="#e01010">x</text><text x="55" y="562" font-family="Liberation Sans" font-size="10" font-weight="bold" fill="#10b010">y</text>
</g>
<!-- cmd panel icons -->
<path d="M861 491.5l2.5 3.5 5-6.5" fill="none" stroke="#000" stroke-width="1.8"/>
<!-- create tab -->
<path transform="translate(1,2)" d="M852.6 88.5l1 5 3.8-3.3-2.3 4.5 5 .3-4.8 1.5 2.5 4-4.3-2.5-1.2 4.8-.800-4.8-4.5 2 3.3-3.8-4.5-1.8 5-.8z" fill="#fffbe4" stroke="#f0e4b0" stroke-width=".6"/>
<path d="M855 96.5l1.5 7.8 1.9-1.8 6.4 7.5 2-1.7-6.4-7.5 2.1-1.6z" fill="#f8f8f8" stroke="#333" stroke-width=".8" stroke-linejoin="round"/>
<!-- modify tab -->
<path d="M877 109c0-10 5-15 16-16.5v5c-7 1-10 5-10 11.5z" fill="#5a6aa0" stroke="#1a2040" stroke-width=".8"/><path d="M879 109c0-8 5-13 14-14.5" stroke="#b8c4e8" stroke-width="1.5" fill="none"/>
<path d="M876.5 92h17.5v16.5" fill="none" stroke="#666" stroke-width=".5" stroke-dasharray="1 1.5"/><path d="M876.5 92v16" fill="none" stroke="#777" stroke-width=".5" stroke-dasharray="1 2"/><rect x="893" y="108.5" width="2" height="2" fill="#111"/><rect x="875.5" y="91" width="2" height="2" fill="#111"/>
<!-- hierarchy -->
<rect x="911.5" y="90.5" width="7" height="7" fill="#e4e8f8" stroke="#4a4a8a"/><g fill="#f4f4fc" stroke="#4a4a8a"><rect x="905.5" y="105.5" width="4" height="4"/><rect x="913" y="105.5" width="4" height="4"/><rect x="920.5" y="105.5" width="4" height="4"/></g><path d="M915 98v7.5M914.5 99.5l-7 6M915.5 99.5l7 6" stroke="#4a4a8a" fill="none"/>
<!-- motion -->
<circle cx="946.5" cy="100" r="7.5" fill="#e4e4e4" stroke="#222" stroke-width="1.8"/><circle cx="946.5" cy="100" r="1.5" fill="#e02020"/><path d="M946.5 94v12M941 100h11M942.5 96l8 8M950.5 96l-8 8" stroke="#555" stroke-width=".7"/><path d="M937.5 94c-2 4-2 8 0 12M935 96c-1 3-1 5 0 8" stroke="#666" fill="none" stroke-width=".8"/>
<!-- display -->
<rect x="964.5" y="91.5" width="18" height="14" rx="1.5" fill="#f4f4f4" stroke="#222" stroke-width="1.8"/><path d="M969 108.5h9M967 110h13" stroke="#333" stroke-width="1.3"/><rect x="969" y="94" width="3" height="9" fill="#3a4aa8"/><path d="M976 94l3.5 9h-7z" fill="#e02818"/><rect x="972.5" y="107.5" width="2" height="1.2" fill="#20c020"/>
<!-- utilities hammer -->
<path d="M994 94c2-3 8-3.5 11-2l3 3-1 1.5-3-2h-3v3h-3.5v-3z" fill="#555" stroke="#222" stroke-width=".6"/><path d="M1000.2 97h3l.5 13h-4z" fill="#c84828" stroke="#222" stroke-width=".6"/><rect x="999.7" y="105" width="4" height="5.5" fill="#222"/>
<!-- stack buttons -->
<path d="M856.5 286.5h6" stroke="#111" stroke-width="1.3"/><path d="M863 283l1.5 1h4l1.5-1.5v8l-1.5-1.5h-4l-1.5 1z" fill="#fff" stroke="#111" stroke-width="1.2"/>
<path d="M897 280.5h8l-1.5 2v9.5l1.5 2h-8l1.5-2v-9.5z" fill="#fff" stroke="#111" stroke-width="1"/>
<path d="M929.5 281l6 9.5 7-10M933.5 291l2.5 2.5 2.5-2.5-2.5-2.5z" fill="none" stroke="#f4f4f4" stroke-width="1"/><path d="M929 280.5l6 9.5 7-10M933 290.5l2.5 2.5 2.5-2.5-2.5-2.5z" fill="none" stroke="#8a8a8a" stroke-width="1"/>
<path d="M955.5 284.5h8.5v7.5c0 1-1 1.5-2 1.5h-5c-1 0-1.5-.5-1.5-1.5zM957.5 284c0-3 5-3 5 0M962 281.5l2-1" fill="none" stroke="#f4f4f4"/><path d="M955 284h8.5v7.5c0 1-1 1.5-2 1.5h-5c-1 0-1.5-.5-1.5-1.5zM957 283.5c0-3 5-3 5 0M961.5 281l2-1" fill="none" stroke="#8a8a8a"/>
<rect x="989" y="280.5" width="12" height="12" fill="#f4f4f4" stroke="#1a2aa0" stroke-width="1.2"/><rect x="989" y="280.5" width="12" height="3" fill="#1a2aa0"/><g fill="#fff" stroke="#222" stroke-width=".8" stroke-dasharray="1 1"><rect x="992.5" y="285.5" width="4" height="3.5"/><rect x="998.5" y="285.5" width="4.5" height="3.5"/><rect x="992.5" y="290" width="4" height="3.5"/><rect x="998.5" y="290" width="4.5" height="3.5"/></g>
<!-- bottom icons -->
<path d="M93.4 623v26M100.3 623v11.5M107.3 623v11.5M114.2 623v11.5M121.2 623v11.5M128.1 623v11.5M135.0 623v11.5M142.0 623v11.5M148.9 623v11.5M155.9 623v11.5M162.8 623v26M169.7 623v11.5M176.7 623v11.5M183.6 623v11.5M190.6 623v11.5M197.5 623v11.5M204.4 623v11.5M211.4 623v11.5M218.3 623v11.5M225.3 623v11.5M232.2 623v26M239.1 623v11.5M246.1 623v11.5M253.0 623v11.5M260.0 623v11.5M266.9 623v11.5M273.8 623v11.5M280.8 623v11.5M287.7 623v11.5M294.7 623v11.5M301.6 623v26M308.5 623v11.5M315.5 623v11.5M322.4 623v11.5M329.4 623v11.5M336.3 623v11.5M343.2 623v11.5M350.2 623v11.5M357.1 623v11.5M364.1 623v11.5M371.0 623v26M377.9 623v11.5M384.9 623v11.5M391.8 623v11.5M398.8 623v11.5M405.7 623v11.5M412.6 623v11.5M419.6 623v11.5M426.5 623v11.5M433.5 623v11.5M440.4 623v26M447.3 623v11.5M454.3 623v11.5M461.2 623v11.5M468.2 623v11.5M475.1 623v11.5M482.0 623v11.5M489.0 623v11.5M495.9 623v11.5M502.9 623v11.5M509.8 623v26M516.7 623v11.5M523.7 623v11.5M530.6 623v11.5M537.6 623v11.5M544.5 623v11.5M551.4 623v11.5M558.4 623v11.5M565.3 623v11.5M572.3 623v11.5M579.2 623v26M586.1 623v11.5M593.1 623v11.5M600.0 623v11.5M607.0 623v11.5M613.9 623v11.5M620.8 623v11.5M627.8 623v11.5M634.7 623v11.5M641.7 623v11.5M648.6 623v26M655.5 623v11.5M662.5 623v11.5M669.4 623v11.5M676.4 623v11.5M683.3 623v11.5M690.2 623v11.5M697.2 623v11.5M704.1 623v11.5M711.1 623v11.5M718.0 623v26M724.9 623v11.5M731.9 623v11.5M738.8 623v11.5M745.8 623v11.5M752.7 623v11.5M759.6 623v11.5M766.6 623v11.5M773.5 623v11.5M780.5 623v11.5M787.4 623v26" stroke="#707070" stroke-width="1" fill="none"/>
<path d="M50 608.5l-4.5 4 4.5 4M187 608.5l4.5 4-4.5 4" fill="none" stroke="#222" stroke-width="1.1"/>
<!-- mini curve editor -->
<rect x="53.5" y="628.5" width="16" height="5" fill="#eee" stroke="#111"/><path d="M55 631c2-2 4-2 6 0s4 2 6 0" fill="none" stroke="#111" stroke-width=".8"/><rect x="53.5" y="641.5" width="16" height="3" fill="#eee" stroke="#111"/><path d="M58 641v-5M56 638l2-2.5 2 2.5M65 636v5M63 639l2 2.5 2-2.5" stroke="#111" fill="none"/>
<!-- layers icon -->
<g fill="#fff" stroke="#111" stroke-width="1.3" stroke-linejoin="round"><path d="M13.0 668.2h14.5l7.5 8h-14.5z"/><path d="M13.0 663.5h14.5l7.5 8h-14.5z"/><path d="M13.0 658.8h14.5l7.5 8h-14.5z"/></g>
<!-- eye, cursor, teapot -->
<path d="M44 666c3-5 10-5 13 0-3 4.5-10 4.5-13 0z" fill="#f4f4f4" stroke="#222" stroke-width="1"/><circle cx="50.5" cy="665.5" r="2.6" fill="#8a6a20" stroke="#111" stroke-width=".8"/><path d="M44.5 663c3-4 9-4 12 0" fill="none" stroke="#222" stroke-width="1"/>
<path d="M63.5 659v11l2.5-2 2 4.5 1.8-.8-2-4.5h3.5z" fill="#fff" stroke="#111" stroke-width=".9"/>
<path d="M78 665c-3-1-3 3 0 4M88 667l3.5-3M79 664.5h9c1.5 3 0 6-1.5 7h-6c-1.5-1-3-4-1.5-7z" fill="#18901c" stroke="#0a500c" stroke-width=".9"/><ellipse cx="83.5" cy="663.5" rx="3" ry="1.3" fill="#18901c" stroke="#0a500c" stroke-width=".8"/><circle cx="83.5" cy="661.3" r=".9" fill="#0a500c"/>
<!-- layer tb icons -->
<g fill="#fff" stroke="#111" stroke-width=".9" stroke-linejoin="round"><path d="M254.0 672.7h10.3l5.8 4.7h-10.3z"/><path d="M254.0 668.0h10.3l5.8 4.7h-10.3z"/><path d="M254.0 663.3h10.3l5.8 4.7h-10.3z"/></g><path d="M262.5 660.5l-.500-4M267 661.5l3-3.5M270 665.5l4-1.5M257.5 661l-2.5-3" stroke="#222" stroke-width="1.6"/><path d="M262.5 660.5l-.500-4M267 661.5l3-3.5M270 665.5l4-1.5M257.5 661l-2.5-3" stroke="#fff" stroke-width=".8"/>
<path d="M294 660.5h4v5.5h5.5v4h-5.5v5.5h-4v-5.5h-5.5v-4h5.5z" fill="#fff" stroke="#222" stroke-width="1.1"/>
<path d="M318 670l12-1.5 8.5 7.5-12 .5z" fill="#e8e8e8" stroke="#111" stroke-width=".9"/><path d="M321.5 658v12l3-2.5 2 4.5 2-1-2-4.5h4z" fill="#fff" stroke="#111" stroke-width=".9"/>
<path d="M349 658.5l13-1.5 8 6-14 1.5z" fill="#e8e8e8" stroke="#111" stroke-width=".9"/><path d="M360 662v12l3-2.5 2 4.5 2-1-2-4.5h4z" fill="#fff" stroke="#111" stroke-width=".9"/>
<!-- lock -->
<rect x="188.5" y="701.5" width="7" height="6" fill="#ddd" stroke="#111"/><path d="M190 701.5v-2.5a2 2 0 0 1 4 0v2.5" fill="none" stroke="#111" stroke-width="1.2"/><path d="M189 704h6M189 706h6" stroke="#111" stroke-width=".6"/>
<!-- abs/offset -->
<rect x="212.5" y="694.5" width="14" height="14" fill="none" stroke="#111"/><path d="M219.5 695v13M213 701.5h13" stroke="#111" stroke-width=".7"/><circle cx="219.5" cy="701.5" r="2" fill="#c5c5c5" stroke="#111"/>
<!-- key -->
<circle cx="597" cy="712.5" r="4.3" fill="none" stroke="#111" stroke-width="2"/><path d="M601 712.5h15M609.5 713v5M614 713v4" stroke="#111" stroke-width="2.2" fill="none"/>
<!-- playback -->
<g fill="#111"><rect x="804.5" y="697.5" width="1.8" height="8.5"/><path d="M813 697.5v8.5l-6.5-4.25zM820 697.5v8.5l-6.5-4.25z"/>
<path d="M838.5 697.5v8.5l-6.5-4.25z"/><rect x="839.5" y="697.5" width="1.8" height="8.5"/><rect x="842.5" y="697.5" width="1.8" height="8.5"/>
<path d="M858.5 697v9l7-4.5z"/>
<rect x="876.5" y="697.5" width="1.8" height="8.5"/><rect x="879.5" y="697.5" width="1.8" height="8.5"/><path d="M883 697.5v8.5l6.5-4.25z"/>
<path d="M902.5 697.5v8.5l6.5-4.25zM909.5 697.5v8.5l6.5-4.25z"/><rect x="916" y="697.5" width="1.8" height="8.5"/>
<rect x="807" y="719" width="1.5" height="8"/><rect x="816.5" y="719" width="1.5" height="8"/><path d="M809 723l3.5-3v6zM816 723l-3.5-3v6z"/></g>
<path d="M872 711v-3.5l-3.5 3.5z" fill="#000"/><path d="M873 707.5v4.5h-4.5" fill="none" stroke="#fff" stroke-width="1"/>
<!-- nav -->
<circle cx="937" cy="698.5" r="4.8" fill="#dcdcdc" stroke="#1a1a8a" stroke-width="1.3"/><path d="M940.5 702.5l5.5 6" stroke="#111" stroke-width="2.4"/><path d="M941.3 702.2l5.2 5.7" stroke="#2030e0" stroke-width="1"/>
<g fill="none" stroke="#a02020" stroke-width="1.2"><rect x="958.5" y="694.5" width="11" height="11"/><path d="M964 694.5v11M958.5 700h11"/></g><circle cx="958" cy="703" r="3.5" fill="#dcdcdc" stroke="#1a1a8a" stroke-width="1.1"/><path d="M960.5 706l4 4" stroke="#111" stroke-width="2"/><path d="M961.2 705.8l3.7 3.7" stroke="#2030e0" stroke-width=".8"/>
<path d="M981 700h8v8h-8zM981 700l3-3h8l-3 3M989 708l3-3v-8" fill="#c8c8c8" stroke="#1a1a8a" stroke-width="1.2"/><path d="M978 697v-2.5h2.5M991 694.5h2.5v2.5M978 707v2.5h2.5M993.5 707v2.5h-2.5" fill="none" stroke="#111" stroke-width="1"/><path d="M996 711v-3.5l-3.5 3.5z" fill="#000"/><path d="M997 707.5v4.5h-4.5" fill="none" stroke="#fff" stroke-width="1"/>
<g fill="none" stroke="#a02020" stroke-width="1.2"><rect x="1005.5" y="694.5" width="11" height="11"/><path d="M1011 694.5v11M1005.5 700h11"/></g><path d="M1001 702h7v7h-7zM1001 702l2.5-2.5h7l-2.5 2.5M1008 709l2.5-2.5v-7" fill="#c8c8c8" stroke="#1a1a8a" stroke-width="1.2"/><path d="M1019 711v-3.5l-3.5 3.5z" fill="#000"/><path d="M1020 707.5v4.5h-4.5" fill="none" stroke="#fff" stroke-width="1"/>
<!-- time config -->
<rect x="908.5" y="717.5" width="10" height="10" fill="#eee" stroke="#111"/><path d="M908.5 719.5h10" stroke="#111" stroke-width="1.5"/><circle cx="916" cy="725" r="3.8" fill="#f4f4f4" stroke="#c02020" stroke-width="1.1"/><path d="M916 722.5v2.5h2" stroke="#c02020" fill="none" stroke-width=".9"/>
<!-- fov -->
<path d="M931 716.5l15 7-15 7z" fill="#d8d8d8" stroke="#111" stroke-width="1.2"/><path d="M937 720c2 2 2 5 0 7" fill="none" stroke="#111"/><path d="M949 733v-3.5l-3.5 3.5z" fill="#000"/><path d="M950 729.5v4.5h-4.5" fill="none" stroke="#fff" stroke-width="1"/>
<!-- pan hand -->
<path d="M957 723c-2-3 0-4 2-2l1 1.5v-5.5c0-1.5 2-1.5 2 0v-1c0-1.5 2-1.5 2 0v1c0-1.5 2-1.5 2 0v1.5c0-1.3 2-1.3 2 0v6c0 3-1.5 4.5-2 6h-6c-1-2-3-4.5-5-7.5z" fill="#f0f0f0" stroke="#111" stroke-width=".9"/><path d="M972 733v-3.5l-3.5 3.5z" fill="#000"/><path d="M973 729.5v4.5h-4.5" fill="none" stroke="#fff" stroke-width="1"/>
<!-- arc rotate -->
<circle cx="984.5" cy="724.5" r="5" fill="none" stroke="#111" stroke-width="1.1"/><path d="M984.5 716v9l6.5-1M984.5 725l-6 4.5" stroke="#1a1ac0" stroke-width="1.2" fill="none"/><path d="M984.5 715l1.8 3h-3.6zM992.5 724l-3 1.8v-3.6zM977.5 730.5l1-3.3 2 2.5z" fill="#111"/><path d="M995 733v-3.5l-3.5 3.5z" fill="#000"/><path d="M996 729.5v4.5h-4.5" fill="none" stroke="#fff" stroke-width="1"/>
<!-- min max -->
<rect x="1009" y="724.5" width="7" height="7" fill="#c5c5c5" stroke="#111" stroke-width="1.3"/><rect x="1001.5" y="717" width="11" height="11" fill="#c5c5c5" stroke="#1a1a8a" stroke-width="1.3"/><path d="M1004 719.5l6 6M1004 719.5h3M1004 719.5v3" stroke="#111" fill="none" stroke-width="1"/>
</svg>
</div></body></html>
